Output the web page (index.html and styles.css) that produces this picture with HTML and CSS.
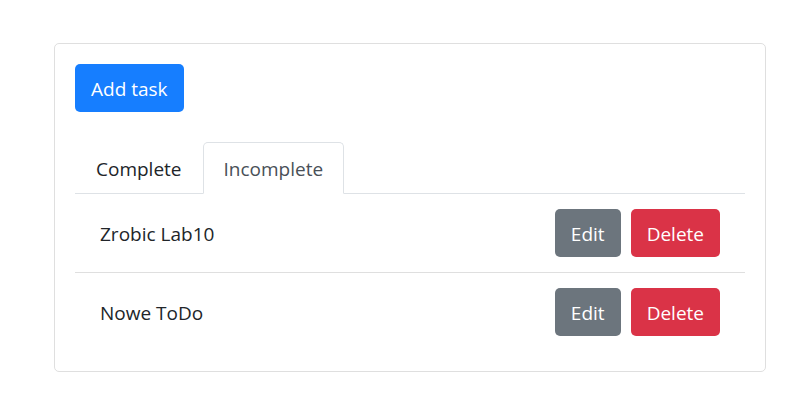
FILE: index.html
```html
<!DOCTYPE html>
<html lang="en">
<head>
<meta charset="utf-8">
<meta name="viewport" content="width=device-width, initial-scale=1">
<title>Tasks</title>
<link rel="stylesheet" href="styles.css">
</head>
<body>
<main class="card">
  <button class="btn btn-primary" type="button">Add task</button>
  <nav class="tabs">
    <a class="tab" href="#complete">Complete</a>
    <a class="tab tab-active" href="#incomplete" aria-current="page">Incomplete</a>
  </nav>
  <ul class="tasks">
    <li class="task">
      <span class="task-name">Zrobic Lab10</span>
      <button class="btn btn-secondary" type="button">Edit</button>
      <button class="btn btn-danger" type="button">Delete</button>
    </li>
    <li class="task">
      <span class="task-name">Nowe ToDo</span>
      <button class="btn btn-secondary" type="button">Edit</button>
      <button class="btn btn-danger" type="button">Delete</button>
    </li>
  </ul>
</main>
</body>
</html>
```
FILE: styles.css
```css
* {
  box-sizing: border-box;
}

body {
  margin: 0;
  padding: 43px 28px 43px 54px;
  background: #fff;
  color: #212529;
  font-family: "Segoe UI", "Open Sans", "Noto Sans", sans-serif;
  font-size: 19px;
  line-height: 30px;
}

.card {
  padding: 20px;
  border: 1px solid #dfdfdf;
  border-radius: 5px;
}

.btn {
  padding: 9px 15px 7px;
  border: 1px solid transparent;
  border-radius: 5px;
  color: #fff;
  font: inherit;
  cursor: pointer;
}

.btn-primary {
  background: #167eff;
}

.btn-secondary {
  background: #6c757d;
}

.btn-danger {
  background: #da3347;
}

.tabs {
  display: flex;
  margin-top: 30px;
  border-bottom: 1px solid #dee2e6;
}

.tab {
  margin-bottom: -1px;
  padding: 11px 20px 9px;
  border: 1px solid transparent;
  border-radius: 5px 5px 0 0;
  color: #212529;
  text-decoration: none;
}

.tab-active {
  border-color: #dee2e6 #dee2e6 #fff;
  background: #fff;
  color: #495057;
}

.tasks {
  margin: 0;
  padding: 0;
  list-style: none;
}

.task {
  display: flex;
  align-items: center;
  gap: 10px;
  padding: 15px 25px;
}

.task + .task {
  border-top: 1px solid #dfdfdf;
}

.task-name {
  flex: 1;
  padding: 9px 0 7px;
}
```
